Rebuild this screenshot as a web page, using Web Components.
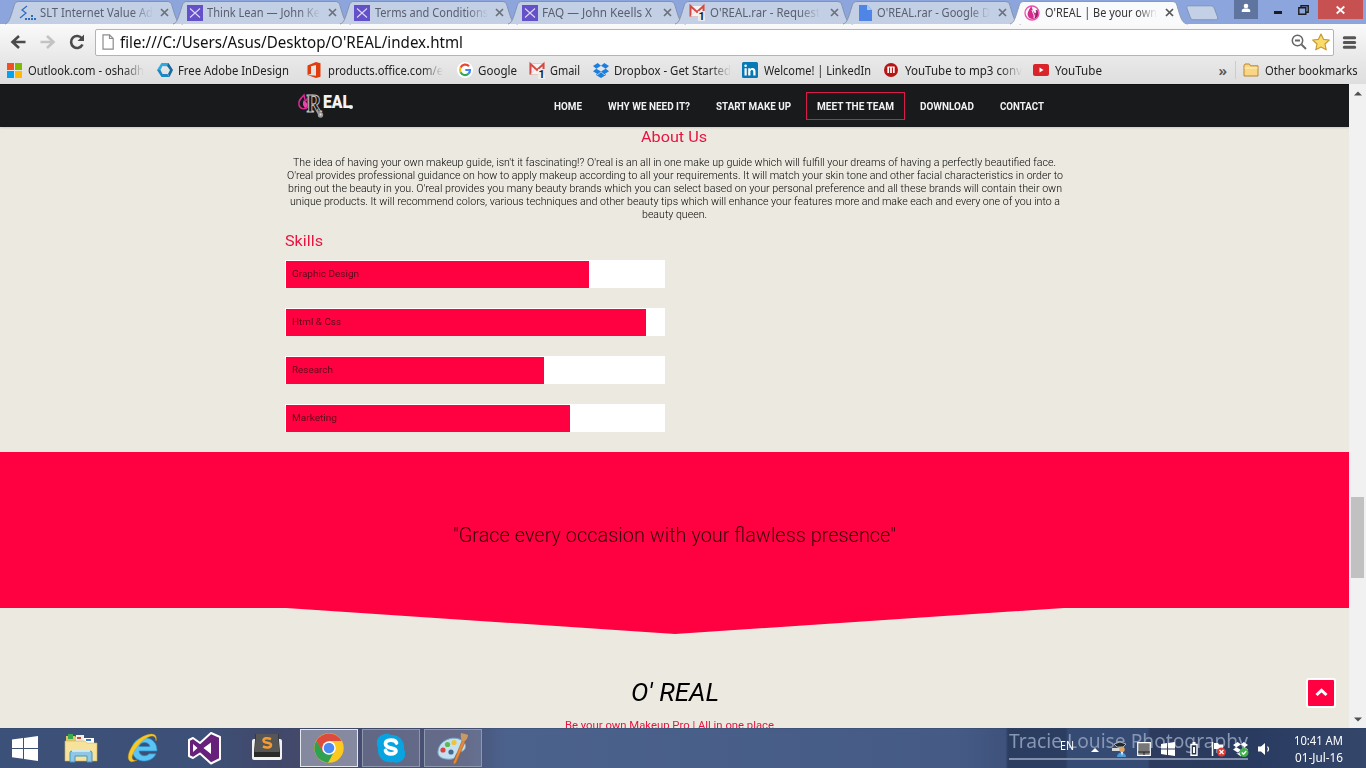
<!DOCTYPE html>
<html lang="en">
<head>
<meta charset="utf-8">
<title>O'REAL | Be your own Makeup Pro</title>
<style>
html,body{margin:0;height:768px;overflow:hidden;background:#eceae0}
body{font-family:"Noto Sans","Open Sans",sans-serif}
</style>
</head>
<body>
<desktop-screen></desktop-screen>
<script>
const ICONS = {
  slt:[18,16,`<path d="M8 1 3 5l4 3-6 5" fill="none" stroke="#2b6cc0" stroke-width="1.2"/><path d="M6 13h2v2H6zM9 13h2v2H9zM12 13h2v2h-2zM15 13h2v2h-2zM12 10h2v2h-2z" fill="#2b6cc0"/>`],
  jkx:[16,16,`<path fill="#6450c8" d="M0 0h16v16H0z"/><path d="m3 3.500 10 9m0-9-10 9" stroke="#dcd8f5" stroke-width="1.100"/>`],
  gmail:[18,17,`<path fill="#f6f3f2" stroke="#d9a9a5" stroke-width=".5" d="M1 1.500h14v11H1z"/><path d="M1.500 12.500V2l6.500 6 6.500-6v10.500" fill="none" stroke="#d54a45" stroke-width="2"/><path d="m2 12 4-5m8 5-4-5" stroke="#ddd"/><path d="M9 7h7v10H9z" fill="#eee" opacity=".85"/><text x="9.500" y="16" font-family="Roboto" font-size="11" font-weight="500">1</text>`],
  doc:[13,16,`<path fill="#4f86e6" d="M0 0h8l5 5v11H0z"/><path fill="#a8c6fb" d="M8 0v5h5z"/>`],
  oreal:[16,16,`<circle cx="8" cy="8" r="7" fill="none" stroke="#ee4fae" stroke-width="1.300"/><path d="M7.500 1C4 6 3 8.500 4 11c1 3 5 4 8 2 3-2 3-6 1-9 0 3-1 4-2 4S8 4 7.500 1z" fill="#d42b8c"/><path d="M8 5c1 4 3 5 2 8" stroke="#fff" fill="none"/><path d="M12 5c2 3 1 6-1 8" stroke="#5b2340" fill="none"/>`],
  close:[9,9,`<path d="m1 1 7 7m0-7-7 7" stroke="#6b717b" stroke-width="1.700"/>`],
  closea:[9,9,`<path d="m1 1 7 7m0-7-7 7" stroke="#555" stroke-width="1.700"/>`],
  back:[16,14,`<path d="M15.500 7H3m6-6L2.500 7 9 13" fill="none" stroke="#4a4a4a" stroke-width="2.600"/>`],
  fwd:[16,14,`<path d="M.5 7h12.500M7 1l6.500 6L7 13" fill="none" stroke="#c3c3c3" stroke-width="2.600"/>`],
  reload:[16,16,`<path d="M13 4.500A6 6 0 1 0 13.500 10.500" fill="none" stroke="#4a4a4a" stroke-width="2.600"/><path d="M15 .5V7H8.500z" fill="#4a4a4a"/>`],
  page:[12,16,`<path d="M1 .8h6.500L11.200 4.500v10.700H1zM7.500.8v3.700h3.700" fill="#fff" stroke="#8c8c8c" stroke-width="1.200"/>`],
  mag:[16,16,`<circle cx="6.500" cy="6.500" r="5.200" fill="none" stroke="#666" stroke-width="1.500"/><path d="M4 6.500h5M10.500 10.500 15 15" stroke="#666" stroke-width="1.800"/>`],
  star:[18,18,`<path d="m9 1 2.500 5.300 5.800.7-4.300 4 1.200 5.800L9 14l-5.200 2.800L5 11 .7 7l5.800-.7z" fill="#fbdc6a" stroke="#c99b37" stroke-width="1.200" stroke-linejoin="round"/>`],
  menu:[13,13,`<path d="M1.300 1.800h10.400M1.300 6.500h10.400M1.300 11.200h10.400" stroke="#555" stroke-width="3" stroke-linecap="round"/>`],
  ms:[15,15,`<path fill="#f25022" d="M0 0h7v7H0z"/><path fill="#7fba00" d="M8 0h7v7H8z"/><path fill="#01a4ef" d="M0 8h7v7H0z"/><path fill="#ffb901" d="M8 8h7v7H8z"/>`],
  hex:[16,14,`<path d="m4.500 0 7 0 1 3-4 .2L5.500 3 3.500 7 0 7z" fill="#2da9dd"/><path d="m11.500 0 4.500 7-3.500 7-1.500-3 2-4-3-4z" fill="#176b9f"/><path d="m0 7 3.500 0 2 4 5 0 2 3h-8z" fill="#1c87c2"/>`],
  office:[14,16,`<path fill="#e03c0c" d="M.5 3.500 9 0l4.500 1.300v13.500L9 16 .5 13 9 13.800V3L4 4.300v7.500L.5 13z"/>`],
  google:[16,16,`<circle cx="8" cy="8" r="8" fill="#fff"/><g fill="none" stroke-width="2.200"><path d="M12 4.300A5 5 0 0 0 3.600 5.700" stroke="#ea4335"/><path d="M3.600 5.700a5 5 0 0 0 0 4.600" stroke="#fbbc05"/><path d="M3.600 10.300a5 5 0 0 0 7.800 1.500" stroke="#34a853"/><path d="M11.400 11.800A5 5 0 0 0 13 8H8.300" stroke="#4285f4"/></g>`],
  dropbox:[16,15,`<path fill="#1a7fe0" d="M4.700 0 8 2.700 3.300 5.700 0 3zM11.300 0 16 3l-3.300 2.700L8 2.700zM0 8.300l3.300-2.600L8 8.600l-3.300 2.600zM16 8.300l-3.300-2.600L8 8.600l3.300 2.600zM8 9.200l3.300 2.800 1.700-1v1l-5 3-5-3v-1l1.700 1z"/>`],
  li:[16,16,`<rect width="16" height="16" rx="1.500" fill="#0779b5"/><path fill="#fff" d="M2.500 6.200h2.200v7.300H2.500zM6.200 6.200h2.100v1c1.200-2 5.200-1.600 5.200 2v4.300h-2.200v-4c0-2.200-2.900-2-2.900 0v4H6.200z"/><circle cx="3.600" cy="3.800" r="1.300" fill="#fff"/>`],
  mp3:[14,14,`<circle cx="7" cy="7" r="7" fill="#b81414"/><path d="M4.200 4v6M7 4v6M9.800 4v6" stroke="#fff" stroke-width="1.700"/><path d="M3.500 4h7" stroke="#fff"/>`],
  yt:[16,12,`<rect width="16" height="12" rx="2" fill="#d9252a"/><path d="m6.500 3.500 4 2.500-4 2.500z" fill="#fff"/>`],
  folder:[16,14,`<path d="M1 13V2.500L2 1h4.500l1 1.800H15V13z" fill="#f9d684" stroke="#b98535"/><path d="M1.500 5h13" stroke="#fff2c4"/>`],
  user:[10,10,`<circle cx="5" cy="3" r="2.300" fill="#fff"/><path d="M.8 9V7.500C.8 6 2.500 5.600 5 5.600s4.200.4 4.200 1.900V9z" fill="#fff"/>`],
  start:[26,25,`<path fill="#fff" d="M0 3.600 11 2.100V12H0zM12 1.900 26 0v12H12zM0 13h11v9.700L0 21.300zM12 13h14v12l-14-1.900z"/>`],
  explorer:[34,30,`<path d="M2 3h9l2 2h17v22H2z" fill="#e2c46b"/><path d="M4 1h5v5H4z" fill="#3aaa4c"/><path d="M12 2h8v6h-8z" fill="#f4f0e6"/><path d="M13 4h4v2h-4z" fill="#d2483c"/><path d="M20 5h10v5H20z" fill="#fff"/><path d="M22 6h5v2h-5z" fill="#357fc7"/><path d="M1 8h20l2 2h10v18H1z" fill="#f6e29a" stroke="#d0b15a" stroke-width=".6"/><path d="M6 29V20q0-2 2-2h18q2 0 2 2v9h-5v-6H11v6z" fill="#8fc8e6" stroke="#4794bd"/><path d="M8 18h18" stroke="#e6f8ff" stroke-width="1.500"/>`],
  ie:[32,32,`<path d="M30 19H12c.5 5.500 8 6 10 2.800h7C24 33 5 31 5 17.500 5 2 30.500 1 30 19zM12.200 14.500h10.600c-.4-5.300-10-5.300-10.600 0z" fill="#5bc4f2" stroke="#2a8ccc" stroke-width=".7"/><path d="M29 9C32-2 16 1 7 12-2 23 0 34 10 28c-6 2-7-4 0-13C16 6 29-1 29 9z" fill="#f8c824" stroke="#d39d12" stroke-width=".4"/>`],
  vs:[34,32,`<path d="M23 1 32 5v22l-9 4.500-11-10L5 26l-4-2V8l4-2 7 5z" fill="#68217a" stroke="#fff" stroke-width="2" stroke-linejoin="round"/><path d="M23 10.500v11.500l-7.500-6zM5 12v8l4.500-4z" fill="#fff"/>`],
  sublime:[32,30,`<path d="M1 8q0-2 2-2h26q2 0 2 2v17q0 2-2 2H3q-2 0-2-2z" fill="#f1f1f1"/><path d="M4.500 1h23l1.500 18v5H3v-5z" fill="#292929"/><path d="M5 1h22l1.500 18h-25z" fill="#565656"/><path d="M20 6.200c-4-2-7.500-.8-7.500 1.300 0 3.300 7.500 1.200 7.500 4.600 0 2.600-4.500 3.400-8 1.300" fill="none" stroke="#f49b32" stroke-width="2.500"/>`],
  chrome:[30,30,`<circle cx="15" cy="15" r="14.700" fill="#fbc91f"/><path d="M2.300 7.700A14.700 14.700 0 0 0 14 29.700L20.500 18 9 18z" fill="#2fa14f"/><path d="M2.300 7.700 9 19l6-11h12.700A14.700 14.700 0 0 0 2.300 7.700z" fill="#dd4b3e"/><circle cx="15" cy="15" r="6.800" fill="#fff"/><circle cx="15" cy="15" r="5.300" fill="#4a8af4"/>`],
  skype:[30,31,`<path d="M9 1c3-.5 5 .5 6 1 9-.5 14 7 13 14 4 8-3 16-11 13C7 31 1 23 2 15-1 8 2 2 9 1z" fill="#08a4e2"/><path d="M20.500 10c-1-4-11-4-11 .8 0 5.700 10.500 3 10.500 7.200 0 3.800-9.500 4-10.500-.5" fill="none" stroke="#fff" stroke-width="3.700" stroke-linecap="round"/>`],
  paint:[32,32,`<path d="M1 19C2 9 14 4 22 7c9 3 8 12 1 13-6 1-3 6-8 7C6 28 0 25 1 19z" fill="#c4dff0" stroke="#7ca7c8"/><circle cx="6" cy="18" r="2.600" fill="#d7463b"/><circle cx="10.500" cy="12.500" r="2.600" fill="#5fb84e"/><circle cx="17" cy="10.500" r="2.600" fill="#f0c436"/><circle cx="14" cy="20" r="2.600" fill="#456b95"/><path d="m16 31 9-22 3 1-9 21q-2 2-3 0z" fill="#e28b38" stroke="#a85b1c" stroke-width=".6"/><path d="M25 9C23 5 24 2 24 1c3 1 6 1 7 2 0 3-2 5-4 7z" fill="#c99965"/>`],
  caret:[8,5,`<path fill="#fff" d="m0 5 4-4 4 4z"/>`],
  people:[15,15,`<path d="M2 2 8 0l6 2-3 3H5z" fill="#24282c" stroke="#ddd" stroke-width=".7"/><path d="M0 6h8v3H0z" fill="#d7d7d7"/><circle cx="10" cy="7.500" r="2.700" fill="#e1a35d"/><path d="M5 15c0-6 9-6 9 0z" fill="#4a9bdc"/><path d="m9 10 1 4 1-4z" fill="#fff"/>`],
  pad:[14,14,`<path fill="#777" stroke="#fff" stroke-width="1.200" d="M.7.7h12.600v12.600H.7z"/><path d="M1 10h12M7 10v3" stroke="#222"/>`],
  win:[14,14,`<path fill="#fff" d="M0 2 6 1v5.500H0zM7 .9 14 0v6.500H7zM0 7.500h6V13l-6-1zM7 7.500h7V14l-7-.9z"/>`],
  batt:[8,14,`<path d="M1 2.500h6v10.800H1z" fill="#26344d" stroke="#fff" stroke-width="1.400"/><path d="M2.500 0h3v2h-3zM3 5h2v6H3z" fill="#fff"/>`],
  flag:[16,15,`<path d="M1.500 0v14" stroke="#fff" stroke-width="1.500"/><path d="M3 1h4l1 1.500h4v6H8L7 7H3z" fill="#fff"/><circle cx="10.500" cy="10" r="4.500" fill="#df3a32"/><path d="m8.500 8 4 4m0-4-4 4" stroke="#fff" stroke-width="1.300"/>`],
  dbx:[16,15,`<path fill="#fff" d="M4.700 0 8 2.500 3.500 5.200 0 3zM10.800 0 15 3l-3.300 2.200L8 2.500zM0 7.500l3.500-2.300L8 8l-3.300 2.600zM15 7.500l-3.300-2.300L8 8l3.300 2.600zM3 11l2 .5 3-2v5z"/><circle cx="11" cy="10.500" r="4.500" fill="#43b049"/><path d="m8.800 10.500 1.700 1.700L13.300 9" stroke="#fff" stroke-width="1.300" fill="none"/>`],
  sound:[14,14,`<path d="M0 4.500h3L7 1v12L3 9.500H0z" fill="#fff"/><path d="M9.500 4.500q2 2.500 0 5" fill="none" stroke="#fff" stroke-width="1.200"/>`],
  up:[13,8,`<path d="m1.500 7 5-4.700 5 4.700" fill="none" stroke="#fff" stroke-width="3"/>`],
  tabshape:[178,23,`<path d="M0 23C4 22 5 18 9 5 10 1.500 11.500.5 14 .5h148c3 0 4 1 5 4 4 13.500 5 18 11 18.500z" fill="var(--fill)"/><path d="M0 23C4 22 5 18 9 5 10 1.500 11.500.5 14 .5h148c3 0 4 1 5 4 4 13.500 5 18 11 18.500" fill="none" stroke="var(--line)"/>`],
  newtab:[34,16,`<path d="M3.500.8h22c2 0 3 .7 4 3l3 8c.6 2 0 3-2 3H9c-2 0-3.300-.7-4-3L2 3.500C1.500 1.800 2 .8 3.500.8z" fill="#c4d0e6" stroke="#7f93ba"/>`],
  min:[8,3,`<path fill="#1c1c1c" d="M0 0h8v3H0z"/>`],
  restore:[11,10,`<path d="M.8 2.800h7v6.400h-7zM3 2.500V.7h7.200v6.600H8" fill="none" stroke="#1c1c1c" stroke-width="1.400"/>`],
  x:[9,8,`<path d="m.7.500 7.600 7m0-7-7.600 7" stroke="#fff" stroke-width="1.700"/>`],
  sbup:[8,5,`<path fill="#505050" d="m0 4.500 4-4 4 4z"/>`],
  sbdn:[8,5,`<path fill="#505050" d="m0 .5 4 4 4-4z"/>`],
  point:[778,26,`<path fill="#ff0040" d="M0 0h778L389 26z"/>`],
  logo:[58,28,`<path d="M7 3C3 7 1 9.500 2 13c1 4 6 5 9 2V5c-2 5-3 5-4-2z" fill="none" stroke="#d92c92" stroke-width="1.500"/><path d="M7 8c-2 3-1 6 1 8 3-1 3-4 1-6z" fill="#ef42a9"/><text x="9.500" y="20" font-family="Liberation Serif" font-size="25" fill="#191a1c" stroke="#c4c4c4" stroke-width="1" textLength="15" lengthAdjust="spacingAndGlyphs">R</text><path d="M21 17c-1 3 0 5 2 6" fill="none" stroke="#999" stroke-width="1.500"/><circle cx="23.500" cy="23" r="2.700" fill="#999"/><circle cx="23.500" cy="22.500" r="1" fill="#e5e5e5"/><circle cx="54" cy="15" r="2" fill="#eee"/><text x="26" y="15.500" font-family="Roboto" font-weight="900" font-size="18" fill="#f4f4f4" textLength="28" lengthAdjust="spacingAndGlyphs">EAL</text>`]
};
const make = (name, html, after) => customElements.define(name, class extends HTMLElement {
  constructor(){ super(); this.attachShadow({mode:'open'}); }
  connectedCallback(){
    this.shadowRoot.innerHTML = typeof html === 'function' ? html(this) : html;
    if (after) after(this);
  }
});
const at = (e,k,d='') => e.getAttribute(k) ?? d;
const icon = (n, s='') => `<ui-icon name="${n}" style="${s}"></ui-icon>`;

make('ui-icon', e => { const [w,h,b] = ICONS[at(e,'name')];
  return `<style>:host{display:block;flex:none;width:${w}px;height:${h}px}svg{display:block;overflow:visible}</style><svg width="${w}" height="${h}" viewBox="0 0 ${w} ${h}">${b}</svg>`; });

/* One line of text condensed or widened to occupy exactly w pixels. */
make('fit-text', e => `<style>:host{display:block;flex:none;white-space:nowrap;width:${at(e,'w')}px;${e.hasAttribute('fade')?'-webkit-mask:linear-gradient(90deg,#000 82%,transparent);':''}}
 span{display:inline-block;transform-origin:0 50%}</style><span><slot></slot></span>`,
 e => { const s = e.shadowRoot.querySelector('span'); const n = s.getBoundingClientRect().width;
  if (n) s.style.transform = `scaleX(${+at(e,'w') / n})`; });

make('browser-tab', e => `<style>:host{display:block;position:relative;flex:none;width:178px;height:23px;margin-right:-10.5px;--fill:#c3cfe4;--line:#8492ae;color:#596070;font-size:12px}
 :host([active]){--fill:#f9fafb;--line:#8e9ab2;color:#333;z-index:1}
 .bg{position:absolute;inset:0}.row{position:relative;display:flex;align-items:center;height:23px;padding-left:14px}
 .ic{width:20.500px;flex:none}.x{margin-left:auto;margin-right:14px}</style>
 <div class="bg">${icon('tabshape')}</div><div class="row"><div class="ic">${icon(at(e,'icon'),at(e,'icon')=='doc'?'margin-left:2px':'')}</div><fit-text w="${at(e,'w','113')}" ${e.hasAttribute('full')?'':'fade'}>${e.textContent}</fit-text><div class="x">${icon(e.hasAttribute('active')?'closea':'close')}</div></div>`);

make('tab-strip', `<style>:host{display:flex;height:24px;background:#8ca6dd;padding-left:5px;box-sizing:border-box;width:1366px;flex:none}
 .tabs{display:flex;padding-top:1px}.nt{margin:5px 0 0 7px}.c{display:flex;margin-left:auto;height:19px}
 .c div{display:flex;align-items:center;justify-content:center}.u{width:24px;background:#5f759f;margin-right:8px}.b{width:26px}.x{width:45px;background:#c75050;margin-right:3px}</style>
 <div class="tabs">
 <browser-tab icon="slt">SLT Internet Value Ad</browser-tab><browser-tab icon="jkx">Think Lean — John Ke</browser-tab><browser-tab icon="jkx">Terms and Conditions</browser-tab><browser-tab icon="jkx" w="110" full>FAQ — John Keells X</browser-tab><browser-tab icon="gmail" w="110">O'REAL.rar - Request</browser-tab><browser-tab icon="doc">O'REAL.rar - Google D</browser-tab><browser-tab icon="oreal" active w="112">O'REAL | Be your own</browser-tab></div>
 <div class="nt">${icon('newtab')}</div>
 <div class="c"><div class="u">${icon('user','margin-top:-3px')}</div><div class="b">${icon('min','margin-top:5px;margin-left:-3px')}</div><div class="b">${icon('restore','margin-left:-3px')}</div><div class="x">${icon('x')}</div></div>`);

make('address-bar', `<style>:host{display:flex;height:36px;align-items:center;padding:0 10px 0 10px;box-sizing:border-box;flex:none}
 .om{display:flex;align-items:center;width:1239px;height:27px;box-sizing:border-box;border:1px solid #b4b4b4;border-radius:2px;background:#fff;padding:0 3px 0 6px;margin-left:10px;font-size:16px;color:#111}
 .r{display:flex;gap:5px;margin-left:auto;align-items:center}</style>
 ${icon('back')}${icon('fwd','margin-left:14px')}${icon('reload','margin-left:13px')}
 <div class="om">${icon('page')}<fit-text w="343" style="margin-left:6px">file:///C:/Users/Asus/Desktop/O'REAL/index.html</fit-text><div class="r">${icon('mag')}${icon('star')}</div></div>${icon('menu','margin-left:9px')}`);

make('book-mark', e => `<style>:host{display:flex;flex:none;align-items:center;width:${at(e,'pitch')}px;height:20px}.i{width:21.500px;display:flex;flex:none}</style><div class="i">${icon(at(e,'icon'))}</div><fit-text w="${at(e,'w')}" ${e.hasAttribute('fade')?'fade':''}>${e.textContent}</fit-text>`);

make('bookmarks-bar', `<style>:host{display:flex;height:20px;padding:0 9px 0 6.500px;align-items:center;flex:none;font-size:12px;color:#222;box-sizing:border-box}.m{margin-left:auto;font-size:15px;line-height:20px;font-weight:600;color:#555}.s{width:1px;height:18px;background:#ccc;margin:0 7px 0 8px}</style>
 <book-mark icon="ms" pitch="150" w="116" fade>Outlook.com - oshadh</book-mark><book-mark icon="hex" pitch="150" w="111">Free Adobe InDesign</book-mark><book-mark icon="office" pitch="150" w="115" fade>products.office.com/e</book-mark><book-mark icon="google" pitch="72" w="39">Google</book-mark><book-mark icon="gmail" pitch="64" w="30">Gmail</book-mark><book-mark icon="dropbox" pitch="149.500" w="117" fade>Dropbox - Get Started</book-mark><book-mark icon="li" pitch="141.500" w="107">Welcome! | LinkedIn</book-mark><book-mark icon="mp3" pitch="149.500" w="117" fade>YouTube to mp3 conv</book-mark><book-mark icon="yt" pitch="70" w="47">YouTube</book-mark>
 <div class="m">»</div><div class="s"></div><book-mark icon="folder" pitch="114" w="92.500">Other bookmarks</book-mark>`);

make('nav-link', e => `<style>:host{display:flex;flex:none;align-items:center;height:28px;box-sizing:border-box;border:1px solid transparent;padding:2px 10px 0;margin-right:4px}:host([on]){border-color:#d81b48}</style><fit-text w="${at(e,'w')}">${e.textContent}</fit-text>`);

make('site-nav', `<style>:host{display:flex;height:42px;flex:none;background:#191a1c;color:#f2f2f2;font:700 10px/14px Roboto,sans-serif;border-top:1px solid #111;box-shadow:0 1px 2px #0002;align-items:center}
 nav{display:flex;margin-left:188px}</style>${icon('logo','margin:-1px 0 0 297px')}
 <nav><nav-link w="28">HOME</nav-link><nav-link w="82">WHY WE NEED IT?</nav-link><nav-link w="75">START MAKE UP</nav-link><nav-link w="77" on>MEET THE TEAM</nav-link><nav-link w="54">DOWNLOAD</nav-link><nav-link w="44">CONTACT</nav-link></nav>`);

make('about-section', `<style>:host{display:block;font:300 11px/13px Roboto,sans-serif;color:#000}
 h3{margin:0 0 0 -1px;font:400 15px/20px Roboto,sans-serif;color:#e8143f}.a{display:flex;flex-direction:column;align-items:center}.p{margin-top:9px}</style>
 <div class="a"><h3><fit-text w="66">About Us</fit-text></h3></div>
 <div class="a p"><fit-text w="763">The idea of having your own makeup guide, isn't it fascinating!? O'real is an all in one make up guide which will fulfill your dreams of having a perfectly beautified face.</fit-text>
 <fit-text w="776">O'real provides professional guidance on how to apply makeup according to all your requirements. It will match your skin tone and other facial characteristics in order to</fit-text>
 <fit-text w="774">bring out the beauty in you. O'real provides you many beauty brands which you can select based on your personal preference and all these brands will contain their own</fit-text>
 <fit-text w="770">unique products. It will recommend colors, various techniques and other beauty tips which will enhance your features more and make each and every one of you into a</fit-text>
 <fit-text w="65">beauty queen.</fit-text></div>`);

make('skill-bar', e => `<style>:host{display:block;width:380px;height:28px;background:#fff;margin-bottom:20px;box-sizing:border-box;padding:1px 0 0 1px}
 div{height:27px;width:${at(e,'fill')}px;background:#ff0040;padding-left:6px;box-sizing:border-box;font:400 9.500px/25px Roboto,sans-serif;color:#5a0a1c}</style><div><fit-text w="${at(e,'w')}">${e.textContent}</fit-text></div>`);

make('skill-list', `<style>:host{display:block;padding:10px 0 0 285px;height:231px;box-sizing:border-box}h3{margin:0 0 9px;font:400 15px/20px Roboto,sans-serif;color:#e8143f}</style>
 <h3><fit-text w="38">Skills</fit-text></h3><skill-bar fill="303" w="67">Graphic Design</skill-bar><skill-bar fill="360" w="49">Html &amp; Css</skill-bar><skill-bar fill="258" w="41">Research</skill-bar><skill-bar fill="284" w="45">Marketing</skill-bar>`);

make('quote-banner', `<style>:host{display:flex;flex-direction:column;align-items:center}
 .q{align-self:stretch;height:156px;background:#ff0040;display:flex;justify-content:center;font:300 20px/26px Roboto,sans-serif;color:#38000e;padding-top:70px;box-sizing:border-box}</style>
 <div class="q"><fit-text w="443">"Grace every occasion with your flawless presence"</fit-text></div>${icon('point')}`);

make('brand-footer', `<style>:host{display:flex;flex-direction:column;align-items:center;font-family:Roboto,sans-serif;padding-top:42px;height:94px;box-sizing:border-box;overflow:hidden}
 .n{font:italic 400 25px/34px Roboto,sans-serif;color:#000}.t{font:400 11px/14px Roboto,sans-serif;color:#e8143f;margin:9px 10px 0 0}</style>
 <div class="n"><fit-text w="88">O' REAL</fit-text></div><div class="t"><fit-text w="209">Be your own Makeup Pro | All in one place</fit-text></div>`);

make('scroll-bar', `<style>:host{display:flex;flex-direction:column;align-items:center;width:17px;background:#f1f1f1;padding:7px 0 6px;box-sizing:border-box}.t{width:13px;height:81px;background:#c1c1c1;margin-top:401px}</style>
 ${icon('sbup')}<div class="t"></div><div style="flex:1"></div>${icon('sbdn')}`);

make('web-page', `<style>:host{display:flex;height:644px;flex:none}main{position:relative;width:1349px;background:#eceae0;overflow:hidden}
 .top{position:absolute;left:1306px;top:594px;width:26px;height:26px;border:2px solid #fff;border-radius:3px;background:#ff0040;display:flex;align-items:center;justify-content:center}</style>
 <main><site-nav></site-nav><about-section></about-section><skill-list></skill-list><quote-banner></quote-banner><brand-footer></brand-footer><div class="top">${icon('up','margin-top:-2px')}</div></main><scroll-bar></scroll-bar>`);

make('task-button', e => `<style>:host{display:flex;width:62px;height:40px;align-items:center;justify-content:center;flex:none}div{width:58px;height:38px;box-sizing:border-box;display:flex;align-items:center;justify-content:center;border:1px solid transparent}
 :host([open]) div{background:#ffffff26;border-color:#8d98ad}:host([on]) div{background:#ffffff59;border-color:#e4e7ec}</style><div>${icon(at(e,'icon'))}</div>`);

make('task-bar', `<style>:host{display:flex;position:relative;height:40px;flex:none;background:linear-gradient(90deg,#3c5179,#3d5077 15%,#42486a 20%,#4a5275 34%,#4b628d 37%,#455b86 70%,#3e527b 73.600%,#2c3d62 73.800%,#2c3d62 78%,#354b73 78.200%,#354b73 84%,#2d3b5d 84.200%,#293b60 92%,#34466a);box-shadow:inset 0 1px #31415f55}
 .s{width:50px;display:flex;align-items:center;justify-content:center}
 .wm{position:absolute;left:1009px;top:-1px;font-size:19px;line-height:28px;color:#8796b3;border-bottom:2px solid #8290ac;height:31px}
 .tray{position:relative;margin-left:auto;display:flex;align-items:center;color:#fff;font-size:12px;width:306px}
 .c{display:flex;justify-content:center;flex:none}.clock{margin-left:16px;display:flex;flex-direction:column;align-items:flex-start;line-height:17px;padding-top:2px}</style>
 <div class="s">${icon('start')}</div><task-button icon="explorer"></task-button><task-button icon="ie"></task-button><task-button icon="vs"></task-button><task-button icon="sublime"></task-button><task-button icon="chrome" open on></task-button><task-button icon="skype" open></task-button><task-button icon="paint" open></task-button>
 <div class="wm"><fit-text w="239">Tracie Louise Photography</fit-text></div>
 <div class="tray"><fit-text w="14" style="margin-top:-5px">EN</fit-text><div class="c" style="width:24px;padding-left:9px">${icon('caret','margin-top:2px')}</div>
 ${[['people',25],['pad',24],['win',24],['batt',28],['flag',22],['dbx',22],['sound',26]].map(([n,w])=>`<div class="c" style="width:${w}px">${icon(n,'margin-top:2px')}</div>`).join('')}
 <div class="clock"><fit-text w="49">10:41 AM</fit-text><fit-text w="48" style="margin-left:1px">01-Jul-16</fit-text></div></div>`);

make('desktop-screen', `<style>:host{display:flex;flex-direction:column;width:1366px;height:768px;overflow:hidden}.chrome{height:60px;flex:none;background:linear-gradient(#fafafa,#e9e9e9 55%,#dedede)}</style>
 <tab-strip></tab-strip><div class="chrome"><address-bar></address-bar><bookmarks-bar></bookmarks-bar></div><web-page></web-page><task-bar></task-bar>`);
</script>
</body>
</html>
